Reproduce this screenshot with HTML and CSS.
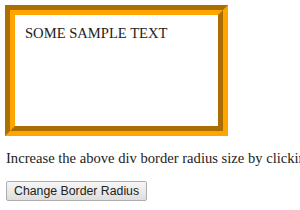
FILE: index.html
```html
<!DOCTYPE html>
<html lang="en">
<head>
  <meta charset="UTF-8">
  <title>border radius</title>
  <link rel="stylesheet" href="styles.css">
</head>
<body>
  <div class="box" id="box">SOME SAMPLE TEXT</div>
  <p class="hint">Increase the above div border radius size by clicking the button.</p>
  <button class="btn" id="btn">Change Border Radius</button>
</body>
</html>
```

FILE: styles.css
```css
html, body {
  margin: 0;
  background: #ffffff;
}

body {
  padding: 5px 6px;
  font-family: "Liberation Serif", "Times New Roman", serif;
  font-size: 14.6px;
  color: #222222;
  overflow: hidden;
  white-space: nowrap;
}

.box {
  width: 183px;
  height: 91px;
  padding: 10px;
  border: 10px groove #ffa500;
  margin-left: -1px;
}

.hint {
  margin: 14px 0;
}

.btn {
  font-family: "Liberation Sans", Arial, sans-serif;
  font-size: 12.3px;
  color: #222222;
  height: 20px;
  padding: 0 7px;
  border: 1px solid #adadad;
  border-radius: 2px;
  background: linear-gradient(#f6f6f6, #dedede);
}
```
